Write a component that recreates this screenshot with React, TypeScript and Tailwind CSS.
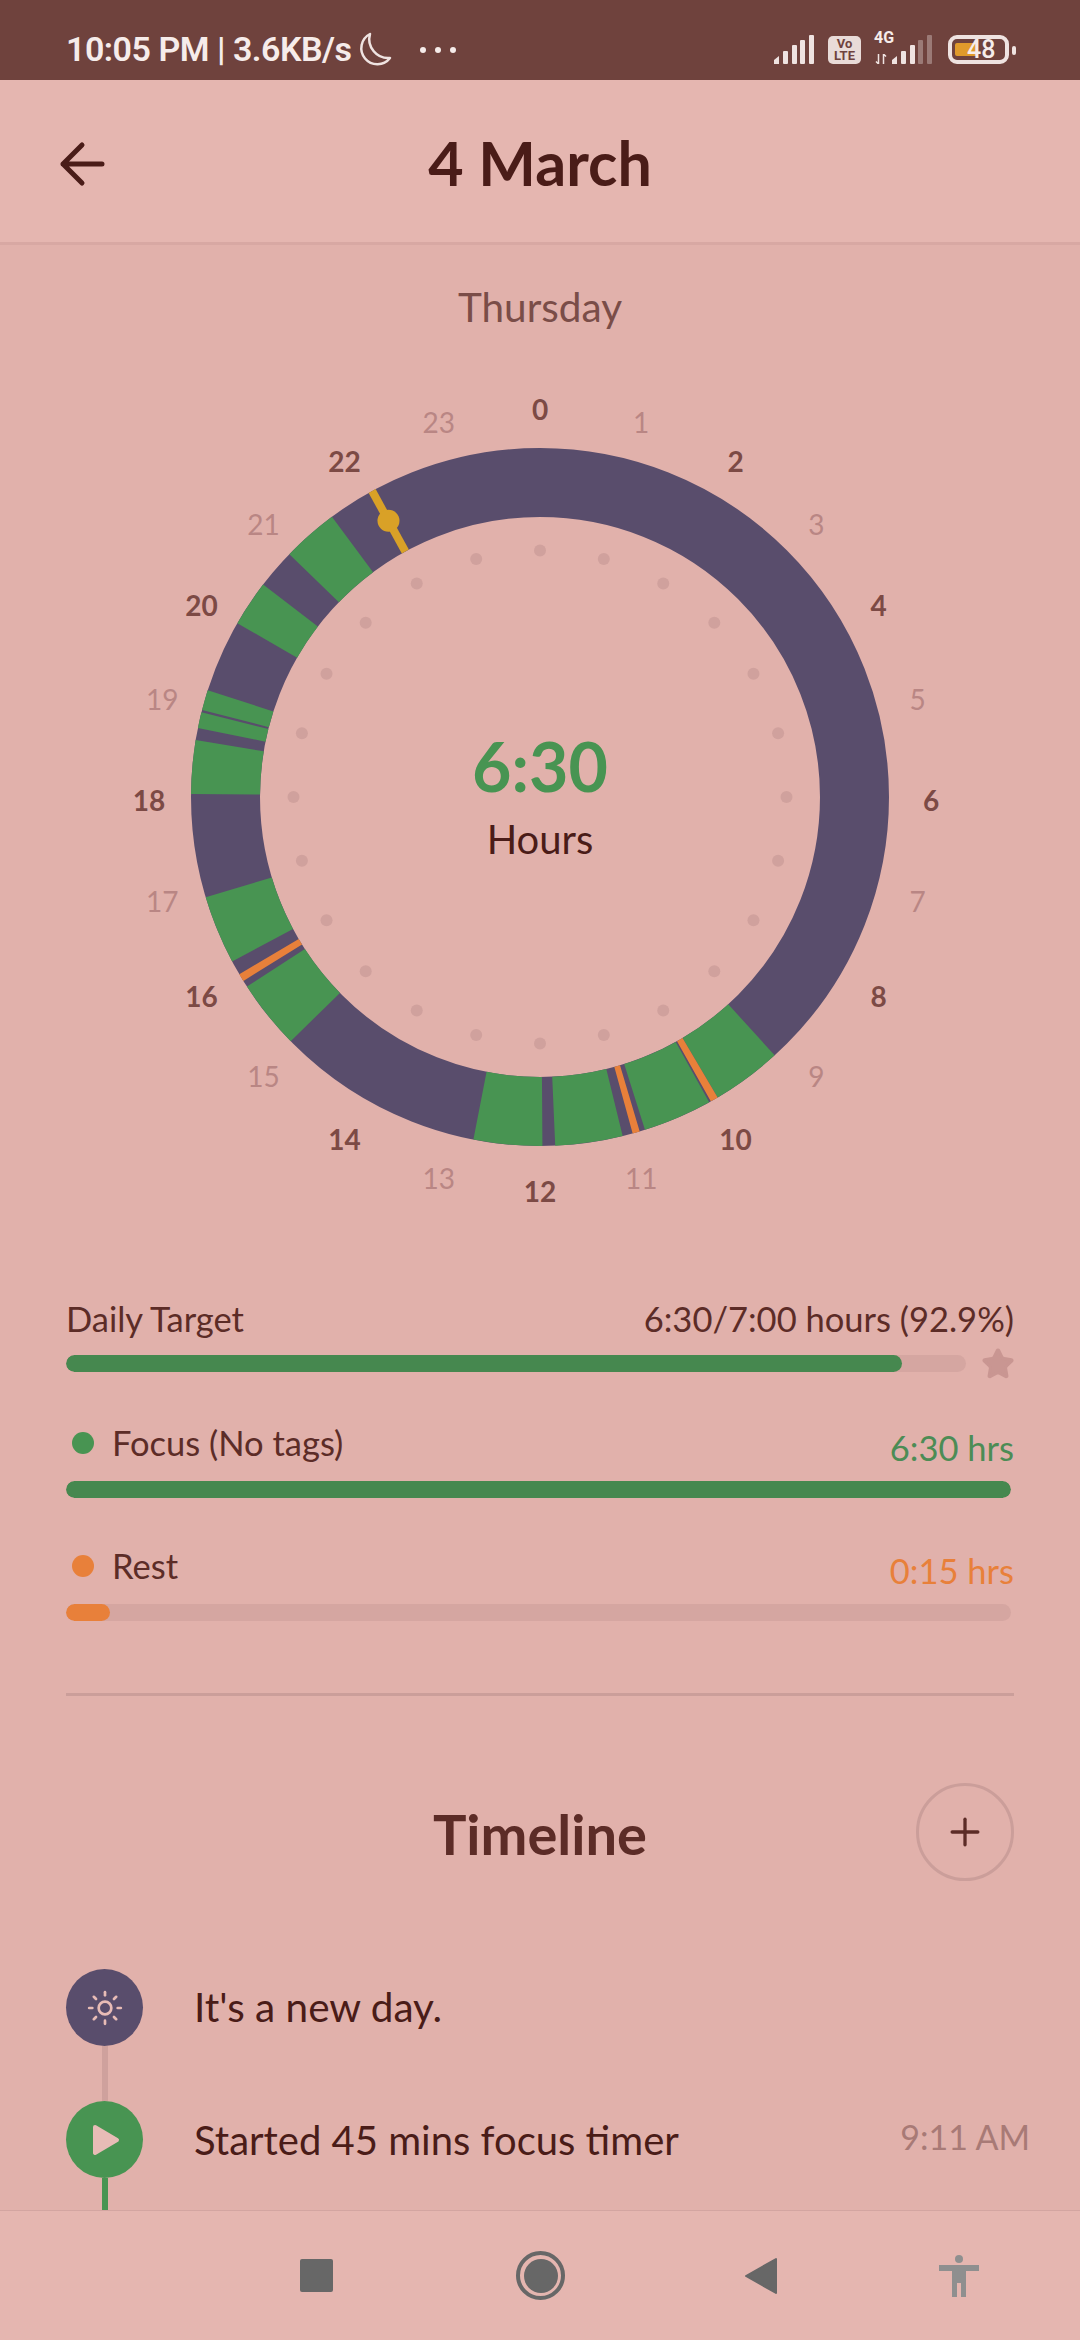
import { Plus, Star, Sun } from 'lucide-react';

const CX = 540;
const CY = 797;
const R_IN = 280;
const R_OUT = 349;

const greens = [
  [137.75, 149.4], [151.0, 162.5], [166.3, 177.5], [179.6, 191.0], [225.6, 237.1], [241.9, 253.3],
  [270.5, 279.4], [281.4, 284.05], [284.45, 287.8], [299.85, 307.5], [314.1, 323.4],
];
const oranges = [[149.4, 150.7], [163.4, 164.6], [238.2, 239.5]];

const polar = (r: number, deg: number, cy = CY) => {
  const a = (deg * Math.PI) / 180;
  return [CX + r * Math.sin(a), cy - r * Math.cos(a)];
};

const sector = (from: number, to: number) => {
  const [x1, y1] = polar(R_OUT, from);
  const [x2, y2] = polar(R_OUT, to);
  const [x3, y3] = polar(R_IN, to);
  const [x4, y4] = polar(R_IN, from);
  return `M${x1} ${y1}A${R_OUT} ${R_OUT} 0 0 1 ${x2} ${y2}L${x3} ${y3}A${R_IN} ${R_IN} 0 0 0 ${x4} ${y4}Z`;
};

const Dial = () => {
  const hours = Array.from({ length: 24 }, (_, i) => i);
  const [lx1, ly1] = polar(R_IN, 331.25);
  const [lx2, ly2] = polar(R_OUT, 331.25);
  const [dx, dy] = polar(315, 331.25);
  return (
    <svg width="1080" height="850" viewBox="0 380 1080 850" className="block">
      <circle cx={CX} cy={CY} r={(R_IN + R_OUT) / 2} fill="none" stroke="#594d6c" strokeWidth={R_OUT - R_IN} />
      {greens.map(([a, b]) => <path key={a} d={sector(a, b)} fill="#489452" />)}
      {oranges.map(([a, b]) => <path key={a} d={sector(a, b)} fill="#e8803a" />)}
      <line x1={lx1} y1={ly1} x2={lx2} y2={ly2} stroke="#d9a127" strokeWidth="8" />
      <circle cx={dx} cy={dy} r="11" fill="#d9a127" />
      {hours.map((h) => {
        const [x, y] = polar(246.5, h * 15);
        return <circle key={h} cx={x} cy={y} r="6" fill="#d0a19d" />;
      })}
      {hours.map((h) => {
        const [x, y] = polar(391, h * 15, 801);
        return (
          <text
            key={h}
            x={x}
            y={y + 10}
            textAnchor="middle"
            fontSize="28"
            fontWeight={h % 2 === 0 ? 700 : 400}
            fill={h % 2 === 0 ? '#7c4a45' : '#b98684'}
          >
            {h}
          </text>
        );
      })}
      <text x={CX} y="792" textAnchor="middle" fontSize="68" fontWeight="700" fill="#489452">6:30</text>
      <text x={CX} y="854" textAnchor="middle" fontSize="40" fill="#4a1c18">Hours</text>
    </svg>
  );
};

const Signal = ({ dim = 0 }: { dim?: number }) => (
  <svg width="40" height="29" viewBox="0 0 40 29">
    <path d="M0 29V25L5 21V29Z" fill="#efe3e1" />
    {[[9, 16], [18, 10], [26, 5], [35, 0]].map(([x, top], i) => (
      <rect key={x} x={x} y={top} width="5" height={29 - top} rx="1" fill="#efe3e1" opacity={i >= 4 - dim ? 0.35 : 1} />
    ))}
  </svg>
);

const StatusBar = () => (
  <div className="h-[80px] shrink-0 bg-[#6f423d] flex items-center pt-[19px] pl-[66px] text-[#f6ecea] font-['Roboto',sans-serif]">
    <span className="text-[34px] font-semibold tracking-[-0.5px] whitespace-nowrap">10:05 PM | 3.6KB/s</span>
    <svg width="36" height="36" viewBox="0 0 36 36" className="ml-[6px]" fill="none" stroke="#efe3e1" strokeWidth="2.5">
      <path d="M13 2A16 16 0 1 0 33 26A19 19 0 0 1 13 2Z" strokeLinejoin="round" />
    </svg>
    <div className="flex gap-[9px] ml-[27px]">
      <span className="w-[6px] h-[6px] rounded-full bg-[#f6ecea]" />
      <span className="w-[6px] h-[6px] rounded-full bg-[#f6ecea]" />
      <span className="w-[6px] h-[6px] rounded-full bg-[#f6ecea]" />
    </div>
    <div className="ml-auto flex items-center pr-[71px]">
      <Signal />
      <div className="ml-[14px] w-[33px] h-[28px] rounded-[5px] bg-[#e9dbd8] text-[#6f423d] flex flex-col items-center justify-center text-[13px] leading-[12px] font-bold">
        <span>Vo</span>
        <span>LTE</span>
      </div>
      <div className="relative ml-[31px]">
        <Signal dim={2} />
        <span className="absolute left-[-18px] top-[-6px] text-[16px] leading-[18px] font-bold">4G</span>
        <svg width="12" height="10" viewBox="0 0 12 10" className="absolute left-[-17px] top-[19px]" stroke="#efe3e1" strokeWidth="1.5" fill="none">
          <path d="M3.5 0V10M1 7.5L3.5 10M8.5 10V0M8.5 0L11 2.5" />
        </svg>
      </div>
      <div className="relative ml-[16px] w-[61px] h-[29px] rounded-[9px] border-[4px] border-[#efe3e1]">
        <div className="absolute left-[3px] top-[4px] w-[22px] h-[13px] rounded-[2px] bg-[#e09a2b]" />
        <span className="absolute left-[15px] top-[-4px] text-[25px] leading-[29px] font-medium text-[#f6ecea]">48</span>
        <div className="absolute right-[-11px] top-[7px] w-[4px] h-[9px] rounded-[2px] bg-[#efe3e1]" />
      </div>
    </div>
  </div>
);

const Bar = ({ percent, color, className }: { percent: number; color: string; className?: string }) => (
  <div className={`h-[17px] rounded-full bg-[#d5a6a1] overflow-hidden ${className ?? ''}`}>
    <div className={`h-full rounded-full ${color}`} style={{ width: `${percent}%` }} />
  </div>
);

export default function App() {
  return (
    <div className="w-[1080px] h-[2340px] flex flex-col overflow-hidden bg-[#e1b1ab] font-['Lato',sans-serif] text-[#4a1c18]">
      <StatusBar />

      <header className="relative h-[165px] shrink-0 bg-[#e5b6b0] border-b-[3px] border-[#d8a8a3] flex items-center justify-center">
        <svg width="50" height="50" viewBox="0 0 50 50" className="absolute left-[58px] top-[59px]" fill="none" stroke="#4a1c18" strokeWidth="5" strokeLinecap="round" strokeLinejoin="round">
          <path d="M24 6L5 25L24 44M5 25H44" />
        </svg>
        <h1 className="mt-[4px] text-[61px] leading-[70px] font-bold">4 March</h1>
      </header>

      <main className="flex-1 min-h-0 overflow-hidden">
        <p className="h-[135px] pt-[40px] text-center text-[40.5px] leading-[44px] text-[#7a4d48]">Thursday</p>
        <Dial />

        <section className="px-[66px]">
          <div className="mt-[67px] h-[45px] flex justify-between text-[34.5px] leading-[44px] text-[#5c2c27]">
            <span>Daily Target</span>
            <span>6:30/7:00 hours (92.9%)</span>
          </div>
          <div className="mt-[13px] flex items-center">
            <Bar percent={92.9} color="bg-[#46884f]" className="w-[900px] shrink-0" />
            <Star size={34} className="shrink-0 ml-[15px] -my-[10px] text-[#c99692] fill-[#c99692]" />
          </div>

          <div className="mt-[49px] h-[49px] flex justify-between text-[34.5px] leading-[44px]">
            <span className="flex items-center self-start text-[#5c2c27]">
              <span className="ml-[6px] mr-[18px] w-[22px] h-[22px] rounded-full bg-[#489452]" />
              Focus (No tags)
            </span>
            <span className="mt-[5px] text-[#4c8c55]">6:30 hrs</span>
          </div>
          <Bar percent={100} color="bg-[#46884f]" className="mt-[11px] mr-[3px]" />

          <div className="mt-[46px] h-[50px] flex justify-between text-[34.5px] leading-[44px]">
            <span className="flex items-center self-start text-[#5c2c27]">
              <span className="ml-[6px] mr-[18px] w-[22px] h-[22px] rounded-full bg-[#e8803a]" />
              Rest
            </span>
            <span className="mt-[5px] text-[#e8803a]">0:15 hrs</span>
          </div>
          <Bar percent={4.7} color="bg-[#e8803a]" className="mt-[10px] mr-[3px]" />

          <div className="mt-[72px] h-[3px] bg-[#cb9e9a]" />

          <div className="mt-[87px] flex items-center justify-between">
            <div className="w-[98px]" />
            <h2 className="mt-[3px] text-[56px] leading-[60px] font-bold text-[#5c2c27]">Timeline</h2>
            <button className="w-[98px] h-[98px] rounded-full border-[3px] border-[#cb9e9a] flex items-center justify-center">
              <Plus size={44} strokeWidth={1.8} className="text-[#5c2c27]" />
            </button>
          </div>

          <div className="mt-[88px] flex">
            <div className="w-[77px] flex flex-col items-center">
              <div className="w-[77px] h-[77px] rounded-full bg-[#594d6c] flex items-center justify-center">
                <Sun size={38} strokeWidth={1.7} className="text-[#e8bcb6]" />
              </div>
              <div className="w-[6px] h-[55px] bg-[#cfa19d]" />
            </div>
            <p className="ml-[51px] h-[77px] flex items-center text-[40.5px]">It's a new day.</p>
          </div>

          <div className="flex">
            <div className="w-[77px] flex flex-col items-center">
              <div className="w-[77px] h-[77px] rounded-full bg-[#489452] flex items-center justify-center">
                <svg width="28" height="32" viewBox="0 0 28 32" className="ml-[2px]">
                  <path d="M3 3L25 16L3 29Z" fill="#e8bcb6" stroke="#e8bcb6" strokeWidth="4" strokeLinejoin="round" />
                </svg>
              </div>
              <div className="w-[6px] h-[40px] bg-[#489452]" />
            </div>
            <div className="flex-1 ml-[51px] -mr-[16px] h-[77px] flex items-center justify-between">
              <p className="text-[40px]">Started 45 mins focus timer</p>
              <span className="-mt-[7px] text-[34px] text-[#a87a76]">9:11 AM</span>
            </div>
          </div>
        </section>
      </main>

      <nav className="relative z-10 h-[130px] shrink-0 bg-[#e5b6b0] border-t border-[#d3a5a1] flex items-center">
        <div className="ml-[300px] w-[33px] h-[33px] rounded-[2px] bg-[#676767]" />
        <div className="ml-[183px] w-[49px] h-[49px] rounded-full border-[4px] border-[#676767] flex items-center justify-center">
          <div className="w-[34px] h-[34px] rounded-full bg-[#676767]" />
        </div>
        <svg width="34" height="38" viewBox="0 0 34 38" className="ml-[179px]">
          <path d="M32 2V36L2 19Z" fill="#676767" stroke="#676767" strokeWidth="2" strokeLinejoin="round" />
        </svg>
        <svg width="40" height="42" viewBox="0 0 40 42" className="ml-[161px]" fill="#8f8f8f">
          <circle cx="20" cy="4" r="4" />
          <path d="M0 10H40V16H27V42H22V28H18V42H13V16H0Z" />
        </svg>
      </nav>
    </div>
  );
}
